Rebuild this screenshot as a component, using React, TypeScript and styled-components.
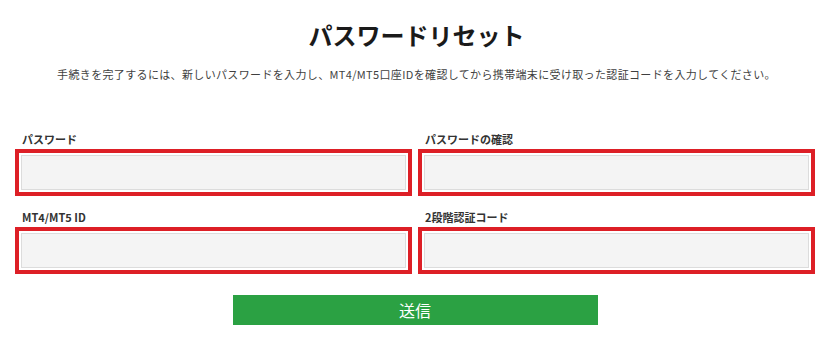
import React from 'react';
import styled, {createGlobalStyle} from 'styled-components';

const GlobalStyle = createGlobalStyle`
  body {
    margin: 0;
    background: #fff;
    font-family: "Noto Sans CJK JP", "Noto Sans", sans-serif;
    color: #333;
  }
`;

export default function App() {
  const fields = ['パスワード', 'パスワードの確認', 'MT4/MT5 ID', '2段階認証コード'];
  return (
    <>
      <GlobalStyle />
      <Page>
        <Title>パスワードリセット</Title>
        <Lead>
          手続きを完了するには、新しいパスワードを入力し、MT4/MT5口座IDを確認してから携帯端末に受け取った認証コードを入力してください。
        </Lead>
        <Form onSubmit={(e) => e.preventDefault()}>
          <Grid>
            {fields.map((label, i) => (
              <Field key={label}>
                <Label>{label}</Label>
                <Highlight>
                  <Input type={i < 2 ? 'password' : 'text'} />
                </Highlight>
              </Field>
            ))}
          </Grid>
          <Submit type="submit">送信</Submit>
        </Form>
      </Page>
    </>
  );
}

const Page = styled.div`
  width: 839px;
  height: 348px;
  display: flex;
  flex-direction: column;
  align-items: center;
  overflow: hidden;
`;

const Title = styled.h1`
  margin: 20px 0 0 -6px;
  font-size: 24px;
  line-height: 30px;
  font-weight: 700;
  color: #1a1a1a;
`;

const Lead = styled.p`
  margin: 17px 0 0 -6px;
  font-size: 11px;
  line-height: 15px;
  color: #3f3f3f;
  letter-spacing: 0.35px;
`;

const Form = styled.form`
  width: 800px;
  margin: 50px 0 0 -9px;
  display: flex;
  flex-direction: column;
  align-items: center;
`;

const Grid = styled.div`
  width: 100%;
  display: grid;
  grid-template-columns: 397px 397px;
  column-gap: 6px;
  row-gap: 14px;
`;

const Field = styled.div`
  display: flex;
  flex-direction: column;
`;

const Label = styled.label`
  font-size: 11px;
  line-height: 14px;
  font-weight: 700;
  color: #333;
  padding-left: 7px;
  margin-bottom: 3px;
`;

const Highlight = styled.div`
  border: 4px solid #dd1f26;
  padding: 2px;
  background: #fff;
`;

const Input = styled.input`
  display: block;
  box-sizing: border-box;
  width: 100%;
  height: 35px;
  border: 1px solid #dcdcdc;
  background: #f4f4f4;
  outline: none;
`;

const Submit = styled.button`
  margin-top: 21px;
  width: 365px;
  height: 30px;
  border: none;
  background: #2ba143;
  color: #fff;
  font-family: "Noto Sans CJK JP", sans-serif;
  font-size: 16px;
  font-weight: 400;
  cursor: pointer;
`;
